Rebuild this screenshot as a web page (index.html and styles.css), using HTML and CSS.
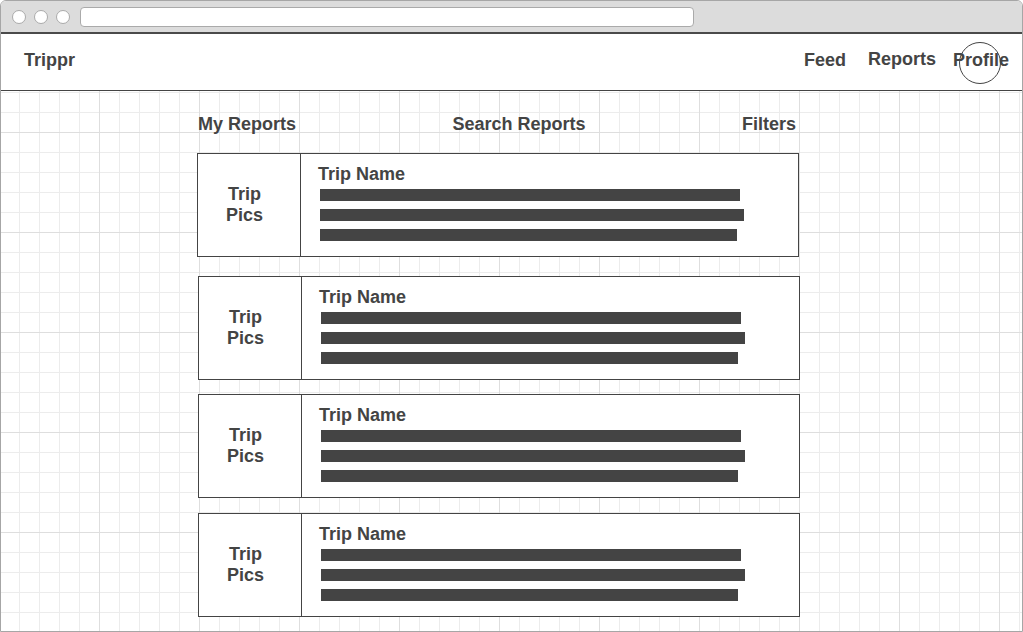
FILE: index.html
```html
<!DOCTYPE html>
<html lang="en">
<head>
<meta charset="utf-8">
<title>Trippr</title>
<link rel="stylesheet" href="styles.css">
</head>
<body>
<div class="window">
  <div class="chrome">
    <span class="dot"></span>
    <span class="dot"></span>
    <span class="dot"></span>
    <div class="address"></div>
  </div>
  <header class="header">
    <div class="brand">Trippr</div>
    <nav class="nav">
      <a class="nav-link">Feed</a>
      <a class="nav-link nav-reports">Reports</a>
      <a class="nav-link nav-active">Profile</a>
    </nav>
  </header>
  <main class="main">
    <div class="tabs">
      <span class="tab">My Reports</span>
      <span class="tab">Search Reports</span>
      <span class="tab">Filters</span>
    </div>
    <div class="cards">
      <div class="card">
        <div class="pics">Trip<br>Pics</div>
        <div class="info">
          <div class="title">Trip Name</div>
          <div class="bars">
            <div class="bar w1"></div>
            <div class="bar w2"></div>
            <div class="bar w3"></div>
          </div>
        </div>
      </div>
      <div class="card">
        <div class="pics">Trip<br>Pics</div>
        <div class="info">
          <div class="title">Trip Name</div>
          <div class="bars">
            <div class="bar w1"></div>
            <div class="bar w2"></div>
            <div class="bar w3"></div>
          </div>
        </div>
      </div>
      <div class="card">
        <div class="pics">Trip<br>Pics</div>
        <div class="info">
          <div class="title">Trip Name</div>
          <div class="bars">
            <div class="bar w1"></div>
            <div class="bar w2"></div>
            <div class="bar w3"></div>
          </div>
        </div>
      </div>
      <div class="card">
        <div class="pics">Trip<br>Pics</div>
        <div class="info">
          <div class="title">Trip Name</div>
          <div class="bars">
            <div class="bar w1"></div>
            <div class="bar w2"></div>
            <div class="bar w3"></div>
          </div>
        </div>
      </div>
    </div>
  </main>
</div>
</body>
</html>
```

FILE: styles.css
```css
* { box-sizing: border-box; }

html, body {
  margin: 0;
  padding: 0;
  background: #fff;
}

body {
  font-family: "Liberation Sans", Arial, sans-serif;
  font-weight: bold;
  color: #444;
  font-size: 18px;
}

.window {
  width: 1023px;
  height: 632px;
  border: 1px solid #a6a6a6;
  border-radius: 6px 6px 0 0;
  overflow: hidden;
  background-color: #fff;
  background-image:
    linear-gradient(to right, #dedede 1px, transparent 1px),
    linear-gradient(to bottom, #dedede 1px, transparent 1px),
    linear-gradient(to right, #ececec 1px, transparent 1px),
    linear-gradient(to bottom, #ececec 1px, transparent 1px);
  background-size: 100px 100px, 100px 100px, 20px 20px, 20px 20px;
  background-position: 98px 31px, 98px 31px, 18px 11px, 18px 11px;
}

.chrome {
  height: 33px;
  background: #dcdcdc;
  border-bottom: 2px solid #4a4a4a;
  display: flex;
  align-items: center;
  padding-left: 11px;
  gap: 8px;
}

.dot {
  width: 14px;
  height: 14px;
  border-radius: 50%;
  background: #fff;
  border: 1px solid #aaa;
}

.address {
  margin-left: 2px;
  width: 614px;
  height: 20px;
  background: #fff;
  border: 1px solid #aaa;
  border-radius: 4px;
}

.header {
  height: 57px;
  background: #fff;
  border-bottom: 1px solid #444;
  display: flex;
  align-items: center;
  justify-content: space-between;
  padding: 0 13px 3px 23px;
  line-height: 21px;
}

.nav {
  display: flex;
  align-items: center;
}

.nav-link {
  color: #444;
  text-decoration: none;
}

.nav-link + .nav-link { margin-left: 22px; }
.nav-reports { position: relative; top: -1px; }
.nav-active { margin-left: 17px !important; position: relative; }

.nav-active::after {
  content: "";
  position: absolute;
  left: 50%;
  top: 50%;
  width: 40px;
  height: 40px;
  margin: -19px 0 0 -22px;
  border: 1px solid #444;
  border-radius: 50%;
}

.main {
  padding: 21px 0 0 196px;
  width: 798px;
}

.tabs {
  display: flex;
  justify-content: space-between;
  padding: 0 3px 0 1px;
  line-height: 24px;
}

.cards {
  margin-top: 17px;
  display: flex;
  flex-direction: column;
  gap: 14px;
}

.card {
  display: flex;
  height: 104px;
  background: #fff;
  border: 1px solid #444;
}

.card:first-child { margin-bottom: 5px; }
.card:last-child { margin-top: 1px; }
.card + .card { margin-left: 1px; margin-right: -1px; }

.pics {
  width: 103px;
  border-right: 1px solid #444;
  display: flex;
  align-items: center;
  justify-content: center;
  text-align: center;
  line-height: 21px;
  padding-right: 9px;
}

.info {
  flex: 1;
  padding: 10px 0 0 17px;
}

.title {
  line-height: 20px;
}

.bars {
  margin-top: 5px;
  margin-left: 2px;
  display: flex;
  flex-direction: column;
  gap: 8px;
}

.bar {
  height: 12px;
  background: #444;
}

.w1 { width: 420px; }
.w2 { width: 424px; }
.w3 { width: 417px; }
```
